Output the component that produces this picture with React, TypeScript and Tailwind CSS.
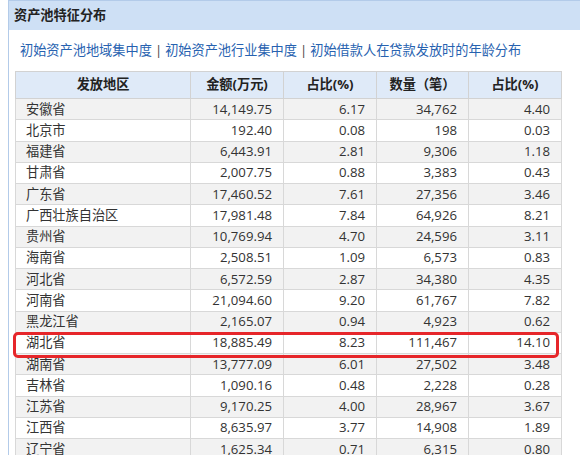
import React from 'react';

// 各省资产池分布数据
const rows: [string, string, string, string, string][] = [
    ['安徽省', '14,149.75', '6.17', '34,762', '4.40'],
    ['北京市', '192.40', '0.08', '198', '0.03'],
    ['福建省', '6,443.91', '2.81', '9,306', '1.18'],
    ['甘肃省', '2,007.75', '0.88', '3,383', '0.43'],
    ['广东省', '17,460.52', '7.61', '27,356', '3.46'],
    ['广西壮族自治区', '17,981.48', '7.84', '64,926', '8.21'],
    ['贵州省', '10,769.94', '4.70', '24,596', '3.11'],
    ['海南省', '2,508.51', '1.09', '6,573', '0.83'],
    ['河北省', '6,572.59', '2.87', '34,380', '4.35'],
    ['河南省', '21,094.60', '9.20', '61,767', '7.82'],
    ['黑龙江省', '2,165.07', '0.94', '4,923', '0.62'],
    ['湖北省', '18,885.49', '8.23', '111,467', '14.10'],
    ['湖南省', '13,777.09', '6.01', '27,502', '3.48'],
    ['吉林省', '1,090.16', '0.48', '2,228', '0.28'],
    ['江苏省', '9,170.25', '4.00', '28,967', '3.67'],
    ['江西省', '8,635.97', '3.77', '14,908', '1.89'],
    ['辽宁省', '1,625.34', '0.71', '6,315', '0.80'],
];

const headers = ['发放地区', '金额(万元)', '占比(%)', '数量（笔）', '占比(%)'];
const widths = ['w-[175px]', 'w-[93px]', 'w-[93px]', 'w-[92px]', 'w-[93px]'];

const App = () => {
    return (
        <div
            className="w-[580px] h-[455px] overflow-hidden bg-white text-[#333] text-[13.2px]"
            style={{ fontFamily: '"Open Sans", "Noto Sans CJK SC", sans-serif' }}
        >
            <div className="ml-[8px] border-l border-t border-[#b3cbe9] h-full">
                {/* Tiêu đề */}
                <div className="h-[29px] bg-[#cee0f5] flex items-center pl-[5px] pt-[1px] font-bold text-[#222]">
                    资产池特征分布
                </div>

                {/* Links */}
                <div className="h-[41px] flex items-center pl-[11px] text-[#2762b0]">
                    <span>初始资产池地域集中度</span>
                    <span className="text-[#444] px-[3px]">|</span>
                    <span>初始资产池行业集中度</span>
                    <span className="text-[#444] px-[3px]">|</span>
                    <span>初始借款人在贷款发放时的年龄分布</span>
                </div>

                {/* Table */}
                <div className="relative ml-[6px] w-[547px]">
                    <table className="w-[547px] border-collapse table-fixed">
                        <thead>
                            <tr className="h-[27px] bg-[#dfeaf8]">
                                {headers.map((h, i) => (
                                    <th key={i} className={`${widths[i]} border border-[#d2d2d2] font-bold text-center text-[#222] p-0`}>
                                        {h}
                                    </th>
                                ))}
                            </tr>
                        </thead>
                        <tbody>
                            {rows.map((r, idx) => (
                                <tr key={idx} className={`h-[21.25px] ${idx % 2 === 0 ? 'bg-[#f2f2f2]' : 'bg-white'}`}>
                                    {r.map((c, i) => (
                                        <td
                                            key={i}
                                            className={`border border-[#d8d8d8] p-0 leading-none ${i === 0 ? 'text-left pl-[10px]' : 'text-right pr-[11px]'}`}
                                        >
                                            {c}
                                        </td>
                                    ))}
                                </tr>
                            ))}
                        </tbody>
                    </table>

                    {/* Khung đỏ đánh dấu 湖北省 */}
                    <div className="absolute top-[261px] left-[-2px] w-[546px] h-[26px] border-[3px] border-[#e6262a] rounded-[5px] pointer-events-none" />
                </div>
            </div>
        </div>
    );
};

export default App;
